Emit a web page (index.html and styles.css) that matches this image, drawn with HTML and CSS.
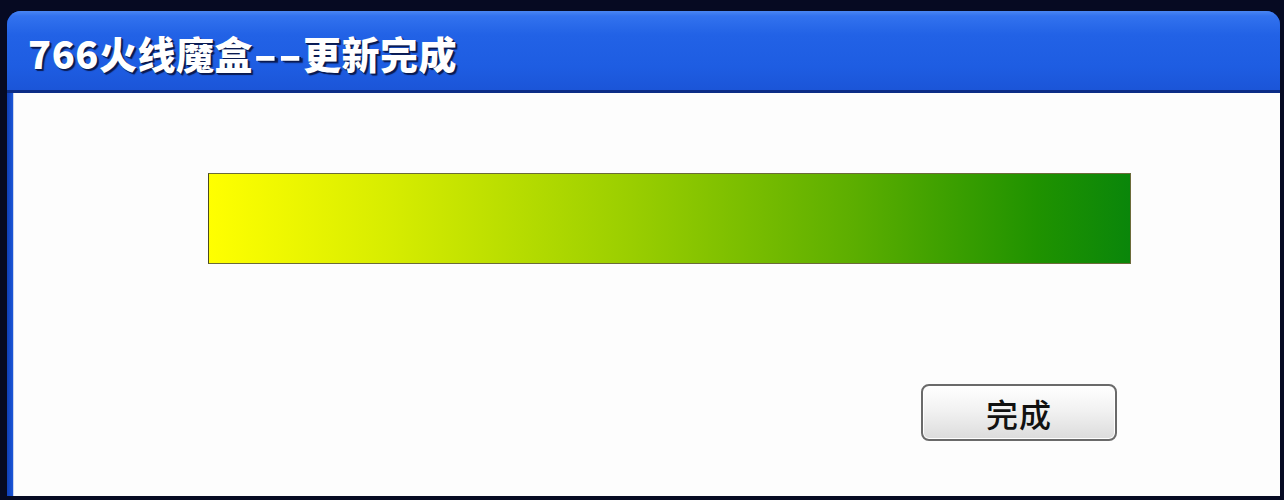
FILE: index.html
```html
<!DOCTYPE html>
<html lang="zh-CN">
<head>
<meta charset="utf-8">
<title>766火线魔盒--更新完成</title>
<link rel="stylesheet" href="styles.css">
</head>
<body>
<div class="window">
  <div class="titlebar">
    <h1 class="title">766火线魔盒<span class="dash">--</span>更新完成</h1>
  </div>
  <div class="content">
    <div class="progress"></div>
    <button class="btn" type="button">完成</button>
  </div>
</div>
</body>
</html>
```
FILE: styles.css
```css
html, body {
  margin: 0;
  padding: 0;
}
body {
  width: 1284px;
  height: 500px;
  overflow: hidden;
  background: #060a22;
}
.window {
  margin: 11px 0 0 7px;
  width: 1273px;
  height: 485px;
  border-radius: 14px 14px 0 0;
  background: linear-gradient(90deg, #0f3fb8 0, #1b56d8 6px, #1b56d8 100%);
  display: flex;
  flex-direction: column;
  overflow: hidden;
}
.titlebar {
  height: 82px;
  flex-shrink: 0;
  box-sizing: border-box;
  padding: 20px 0 0 21px;
  background: linear-gradient(180deg, #4a86f2 0, #3272ee 5px, #2262e6 30%, #1e5de2 70%, #1b55d8 100%);
  border-bottom: 3px solid #0b2c86;
}
.title {
  margin: 0;
  font-family: "Noto Sans CJK SC", "Noto Sans", sans-serif;
  font-weight: 900;
  font-size: 38px;
  line-height: 44px;
  letter-spacing: 0.5px;
  color: #ffffff;
  text-shadow: 2px 2px 1px #0a1a50, 1px 1px 0 #0a1a50;
  white-space: nowrap;
}
.dash {
  display: inline-block;
  letter-spacing: 0;
  transform: scaleX(1.7);
  transform-origin: left center;
  margin-right: 21px;
}
.content {
  flex: 1;
  margin: 0 0 0 6px;
  background: #fdfdfd;
  border-left: 1px solid #c9d4ee;
  padding: 80px 0 0 194px;
  display: flex;
  flex-direction: column;
  align-items: flex-start;
}
.progress {
  width: 923px;
  height: 91px;
  flex-shrink: 0;
  box-sizing: border-box;
  border: 1px solid #6b6b3a;
  border-left-color: #4a4a20;
  background: linear-gradient(90deg, #ffff00 0%, #d6ec00 20%, #9ccf00 45%, #5cae00 70%, #1f9200 90%, #0a860a 100%);
}
.btn {
  margin: 120px 0 0 713px;
  width: 196px;
  height: 57px;
  flex-shrink: 0;
  box-sizing: border-box;
  border: 2px solid #6a6a6a;
  border-radius: 8px;
  background: linear-gradient(180deg, #ffffff 0%, #f2f2f2 45%, #dcdcdc 100%);
  box-shadow: inset 0 0 0 1px #ffffff;
  font-family: "Noto Sans CJK SC", "Noto Sans", sans-serif;
  font-size: 32px;
  font-weight: 500;
  line-height: 1;
  color: #111111;
  padding: 0;
  letter-spacing: 1px;
}
```
